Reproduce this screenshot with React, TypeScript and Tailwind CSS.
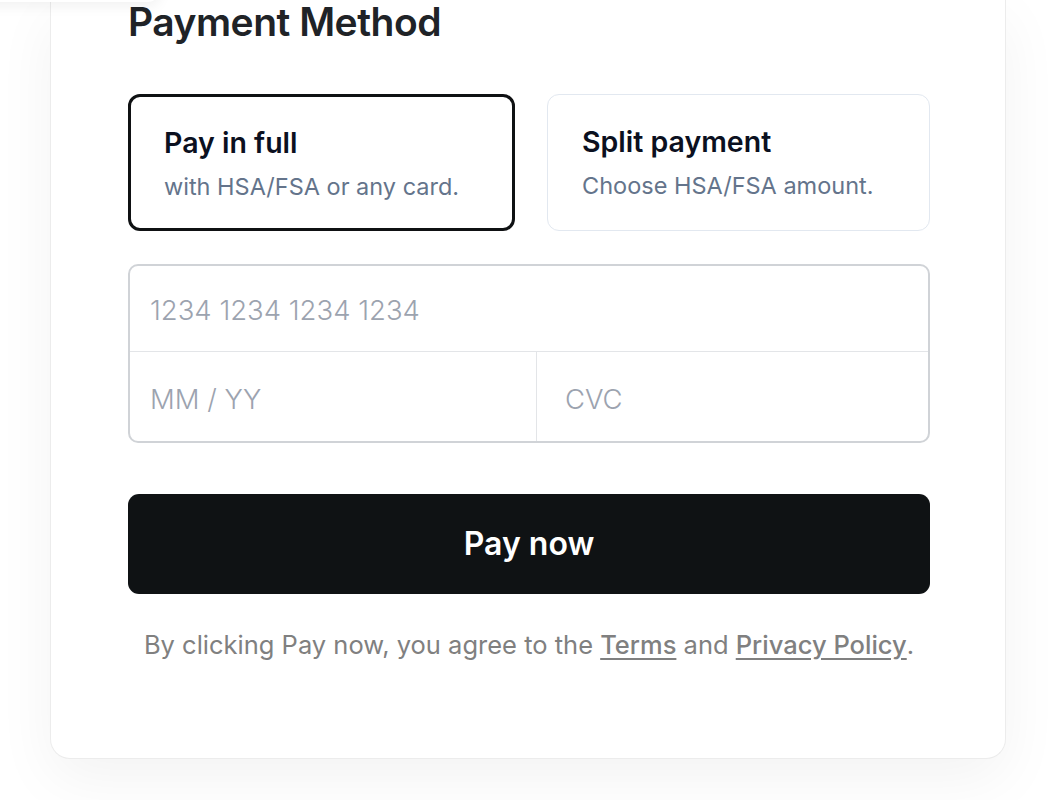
import { useState } from "react";

const options = [
  { id: "full", title: "Pay in full", sub: "with HSA/FSA or any card." },
  { id: "split", title: "Split payment", sub: "Choose HSA/FSA amount." },
];

const App = () => {
  const [selected, setSelected] = useState("full");

  return (
    <div className="relative min-h-[800px] overflow-hidden bg-white font-['Inter',sans-serif]">
      {/* shadow of the header that sits above the fold */}
      <div className="absolute -top-[40px] -left-[20px] h-[42px] w-[180px] rounded-xl bg-white shadow-[0_4px_14px_rgba(0,0,0,0.06)]" />

      <div className="mx-auto w-[956px] rounded-b-[20px] border-x border-b border-[#ececec] bg-white pl-[77px] pr-[75px] pb-[96px] shadow-[0_20px_60px_rgba(0,0,0,0.05)]">
        <h1 className="text-[39px] font-semibold leading-[44px] tracking-[-0.5px] text-[#202327]">
          Payment Method
        </h1>

        <div className="mt-[50px] grid grid-cols-[387px_383px] gap-[32px]">
          {options.map((o) => {
            const active = selected === o.id;
            return (
              <button
                key={o.id}
                onClick={() => setSelected(o.id)}
                className={
                  active
                    ? "h-[137px] rounded-[12px] border-[3px] border-[#0f1113] pl-[33px] pt-[2px] text-left"
                    : "h-[137px] rounded-[12px] border-[1.5px] border-[#e2e8f0] pl-[34px] pt-[1px] text-left"
                }
              >
                <div className="text-[28.5px] font-semibold leading-[34px] text-[#0b1020]">{o.title}</div>
                <div className="mt-[12px] text-[23.5px] leading-[30px] text-[#64748b]">{o.sub}</div>
              </button>
            );
          })}
        </div>

        <div className="mt-[33px] overflow-hidden rounded-[10px] border-2 border-[#d0d3d7] text-[27.5px] font-light text-[#9ca3af]">
          <div className="flex h-[86px] items-center border-b border-[#e3e5e8] px-[20px] pt-[5px]">1234 1234 1234 1234</div>
          <div className="grid h-[89px] grid-cols-[407px_1fr]">
            <div className="flex items-center border-r border-[#e3e5e8] px-[20px] pt-[6px]">MM / YY</div>
            <div className="flex items-center px-[28px] pt-[6px]">CVC</div>
          </div>
        </div>

        <button className="mt-[51px] flex h-[100px] w-full items-center justify-center rounded-[11px] bg-[#0f1214] text-[32px] font-semibold text-white">
          Pay now
        </button>

        <p className="mt-[34px] text-center text-[25.5px] leading-[34px] text-[#808080]">
          By clicking Pay now, you agree to the{" "}
          <a className="font-medium underline underline-offset-4">Terms</a> and{" "}
          <a className="font-medium underline underline-offset-4">Privacy Policy</a>.
        </p>
      </div>
    </div>
  );
};

export default App;
